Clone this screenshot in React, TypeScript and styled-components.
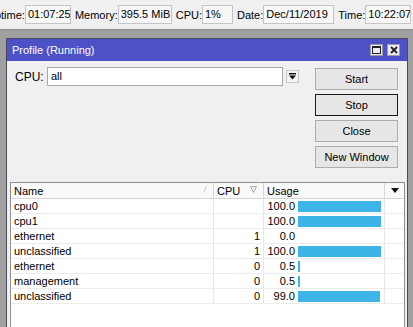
import React from "react";
import styled, { createGlobalStyle } from "styled-components";

const GlobalStyle = createGlobalStyle`
  html, body {
    margin: 0;
    padding: 0;
  }
  body {
    background: #a0a0a0;
    font-family: "Liberation Sans", Arial, sans-serif;
    font-size: 11px;
    color: #000;
    overflow: hidden;
  }
`;

const Page = styled.div`
  width: 413px;
  height: 327px;
  overflow: hidden;
  display: flex;
  flex-direction: column;
`;

const StatusBar = styled.div`
  height: 29px;
  flex: none;
  background: #f0f0f0;
  border-bottom: 1px solid #8c8c8c;
  overflow: hidden;
`;

const StatusRow = styled.div`
  display: flex;
  align-items: center;
  height: 100%;
  margin-left: -13px;
  white-space: nowrap;
`;

const StatusLabel = styled.span`
  margin-left: 4px;
  &:first-child {
    margin-left: 0;
  }
`;

const StatusField = styled.span<{ $w: number }>`
  box-sizing: border-box;
  width: ${(p) => p.$w}px;
  height: 19px;
  line-height: 17px;
  padding-left: 2px;
  background: #f7f7f7;
  border: 1px solid #c4c4c4;
  overflow: hidden;
`;

const Desktop = styled.div`
  flex: 1;
  display: flex;
  padding: 8px 0 0 6px;
  min-height: 0;
`;

const Window = styled.div`
  width: 402px;
  box-sizing: border-box;
  border: 1px solid #4a4a58;
  border-bottom: none;
  background: #f0f0f0;
  display: flex;
  flex-direction: column;
`;

const TitleBar = styled.div`
  height: 22px;
  flex: none;
  background: #4d51c6;
  color: #fff;
  display: flex;
  align-items: center;
  padding: 0 7px 0 5px;
  font-size: 11px;
`;

const TitleText = styled.span`
  flex: 1;
`;

const TitleButtons = styled.div`
  display: flex;
  gap: 4px;
`;

const TitleButton = styled.div`
  width: 13px;
  height: 12px;
  box-sizing: border-box;
  background: #ececec;
  border: 1px solid #9a9aa8;
  display: flex;
  align-items: center;
  justify-content: center;
`;

const Body = styled.div`
  flex: 1;
  display: flex;
  flex-direction: column;
  padding: 0 2px 0 3px;
  min-height: 0;
`;

const TopSection = styled.div`
  display: flex;
  align-items: flex-start;
  padding: 6px 7px 0 5px;
  margin-bottom: 14px;
`;

const FilterRow = styled.div`
  flex: 1;
  display: flex;
  align-items: center;
  height: 19px;
`;

const FilterLabel = styled.span`
  width: 32px;
  font-size: 12px;
`;

const FilterInput = styled.div`
  box-sizing: border-box;
  width: 236px;
  height: 19px;
  line-height: 17px;
  padding-left: 3px;
  background: #fff;
  border: 1px solid #a8a8a8;
`;

const DropButton = styled.div`
  box-sizing: border-box;
  width: 13px;
  height: 13px;
  margin-left: 3px;
  background: #f4f4f4;
  border: 1px solid #c8c8c8;
  display: flex;
  align-items: center;
  justify-content: center;
`;

const ButtonColumn = styled.div`
  display: flex;
  flex-direction: column;
  gap: 4px;
  margin-top: 1px;
  width: 83px;
`;

const ActionButton = styled.div<{ $focused?: boolean }>`
  box-sizing: border-box;
  height: 22px;
  background: #e6e6e6;
  border: 1px solid ${(p) => (p.$focused ? "#1a1a1a" : "#adadad")};
  display: flex;
  align-items: center;
  justify-content: center;
  font-size: 11px;
`;

const Table = styled.div`
  flex: 1;
  width: 395px;
  box-sizing: border-box;
  background: #fff;
  border: 1px solid #8e8f94;
  border-bottom: none;
`;

const cols = "203px 50px 121px 19px";

const HeaderRow = styled.div`
  display: grid;
  grid-template-columns: ${cols};
  height: 15px;
  background: #f9f9f9;
  border-bottom: 1px solid #d5d5d5;
`;

const HeaderCell = styled.div`
  position: relative;
  display: flex;
  align-items: center;
  padding-left: 3px;
  border-right: 1px solid #d5d5d5;
  &:last-child {
    border-right: none;
    justify-content: center;
    padding-left: 0;
  }
`;

const SortMark = styled.span`
  position: absolute;
  right: 6px;
  top: 3px;
  display: flex;
`;

const Row = styled.div`
  display: grid;
  grid-template-columns: ${cols};
  height: 15px;
  box-sizing: border-box;
  border-bottom: 1px solid #ececec;
`;

const Cell = styled.div<{ $align?: "left" | "right" }>`
  display: flex;
  align-items: center;
  justify-content: ${(p) => (p.$align === "right" ? "flex-end" : "flex-start")};
  padding: 0 3px;
  border-right: 1px solid #e6e6e6;
  white-space: nowrap;
  &:last-child {
    border-right: none;
  }
`;

const UsageCell = styled.div`
  display: flex;
  align-items: center;
  border-right: 1px solid #e6e6e6;
`;

const UsageValue = styled.span`
  width: 31px;
  text-align: right;
`;

const UsageBar = styled.div`
  height: 11px;
  margin-left: 3px;
  background: #3cb4e8;
`;

const rows = [
  { name: "cpu0", cpu: "", usage: 100.0 },
  { name: "cpu1", cpu: "", usage: 100.0 },
  { name: "ethernet", cpu: "1", usage: 0.0 },
  { name: "unclassified", cpu: "1", usage: 100.0 },
  { name: "ethernet", cpu: "0", usage: 0.5 },
  { name: "management", cpu: "0", usage: 0.5 },
  { name: "unclassified", cpu: "0", usage: 99.0 },
];

const barWidth = (v: number) => (v <= 0 ? 0 : Math.max(2, Math.round(v * 0.83)));

const App = () => {
  return (
    <Page>
      <GlobalStyle />
      <StatusBar>
        <StatusRow>
          <StatusLabel>Uptime:</StatusLabel>
          <StatusField $w={46}>01:07:25</StatusField>
          <StatusLabel>Memory:</StatusLabel>
          <StatusField $w={54}>395.5 MiB</StatusField>
          <StatusLabel>CPU:</StatusLabel>
          <StatusField $w={31}>1%</StatusField>
          <StatusLabel>Date:</StatusLabel>
          <StatusField $w={71}>Dec/11/2019</StatusField>
          <StatusLabel>Time:</StatusLabel>
          <StatusField $w={46}>10:22:07</StatusField>
        </StatusRow>
      </StatusBar>
      <Desktop>
        <Window>
          <TitleBar>
            <TitleText>Profile (Running)</TitleText>
            <TitleButtons>
              <TitleButton>
                <svg width="9" height="8" viewBox="0 0 9 8">
                  <rect x="0.5" y="0.5" width="8" height="7" fill="none" stroke="#222" />
                  <rect x="0" y="0" width="9" height="2" fill="#222" />
                </svg>
              </TitleButton>
              <TitleButton>
                <svg width="8" height="8" viewBox="0 0 8 8">
                  <path d="M1 1 L7 7 M7 1 L1 7" stroke="#222" strokeWidth="1.8" />
                </svg>
              </TitleButton>
            </TitleButtons>
          </TitleBar>
          <Body>
            <TopSection>
              <FilterRow>
                <FilterLabel>CPU:</FilterLabel>
                <FilterInput>all</FilterInput>
                <DropButton>
                  <svg width="7" height="7" viewBox="0 0 7 7">
                    <rect x="0" y="0" width="7" height="1.5" fill="#111" />
                    <path d="M0 2.5 H7 L3.5 6.5 Z" fill="#111" />
                  </svg>
                </DropButton>
              </FilterRow>
              <ButtonColumn>
                <ActionButton>Start</ActionButton>
                <ActionButton $focused>Stop</ActionButton>
                <ActionButton>Close</ActionButton>
                <ActionButton>New Window</ActionButton>
              </ButtonColumn>
            </TopSection>
            <Table>
              <HeaderRow>
                <HeaderCell>
                  Name
                  <SortMark>
                    <svg width="4" height="7" viewBox="0 0 4 7">
                      <path d="M0.5 6.5 L3.5 0.5" stroke="#c8c8c8" strokeWidth="1" />
                    </svg>
                  </SortMark>
                </HeaderCell>
                <HeaderCell>
                  CPU
                  <SortMark>
                    <svg width="7" height="7" viewBox="0 0 7 7">
                      <path d="M0.5 0.5 H6.5 L3.5 6.5 Z" fill="none" stroke="#a8a8a8" strokeWidth="1" />
                    </svg>
                  </SortMark>
                </HeaderCell>
                <HeaderCell>Usage</HeaderCell>
                <HeaderCell>
                  <svg width="8" height="5" viewBox="0 0 8 5">
                    <path d="M0 0 H8 L4 5 Z" fill="#111" />
                  </svg>
                </HeaderCell>
              </HeaderRow>
              {rows.map((r, i) => (
                <Row key={i}>
                  <Cell>{r.name}</Cell>
                  <Cell $align="right">{r.cpu}</Cell>
                  <UsageCell>
                    <UsageValue>{r.usage.toFixed(1)}</UsageValue>
                    <UsageBar style={{ width: barWidth(r.usage) }} />
                  </UsageCell>
                  <Cell />
                </Row>
              ))}
            </Table>
          </Body>
        </Window>
      </Desktop>
    </Page>
  );
};

export default App;
